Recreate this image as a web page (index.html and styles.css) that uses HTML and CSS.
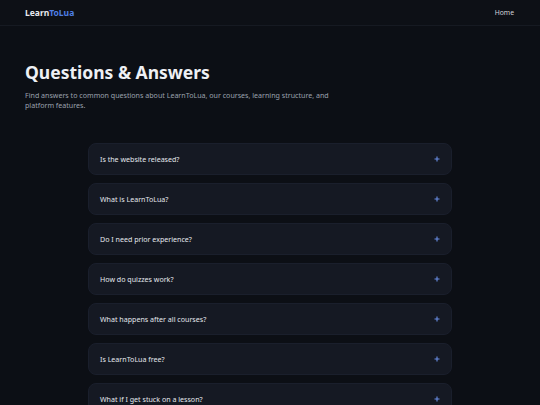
FILE: index.html
```html
<!DOCTYPE html>
<html lang="en">
<head>
<meta charset="utf-8">
<title>Questions &amp; Answers - LearnToLua</title>
<link rel="stylesheet" href="styles.css">
</head>
<body>
<header class="nav">
  <div class="logo">Learn<span class="accent">ToLua</span></div>
  <span class="nav-link">Home</span>
</header>
<main class="page">
  <section class="hero">
    <h1 class="title">Questions &amp; Answers</h1>
    <p class="lead">Find answers to common questions about LearnToLua, our courses, learning structure, and platform features.</p>
  </section>
  <section class="faq">
    <div class="item"><span class="q">Is the website released?</span><svg class="plus" viewBox="0 0 6 6"><path d="M3 0.5V5.5M0.5 3H5.5"/></svg></div>
    <div class="item"><span class="q">What is LearnToLua?</span><svg class="plus" viewBox="0 0 6 6"><path d="M3 0.5V5.5M0.5 3H5.5"/></svg></div>
    <div class="item"><span class="q">Do I need prior experience?</span><svg class="plus" viewBox="0 0 6 6"><path d="M3 0.5V5.5M0.5 3H5.5"/></svg></div>
    <div class="item"><span class="q">How do quizzes work?</span><svg class="plus" viewBox="0 0 6 6"><path d="M3 0.5V5.5M0.5 3H5.5"/></svg></div>
    <div class="item"><span class="q">What happens after all courses?</span><svg class="plus" viewBox="0 0 6 6"><path d="M3 0.5V5.5M0.5 3H5.5"/></svg></div>
    <div class="item"><span class="q">Is LearnToLua free?</span><svg class="plus" viewBox="0 0 6 6"><path d="M3 0.5V5.5M0.5 3H5.5"/></svg></div>
    <div class="item"><span class="q">What if I get stuck on a lesson?</span><svg class="plus" viewBox="0 0 6 6"><path d="M3 0.5V5.5M0.5 3H5.5"/></svg></div>
  </section>
</main>
</body>
</html>
```
FILE: styles.css
```css
* { box-sizing: border-box; }
html, body { margin: 0; padding: 0; }
body {
  background: #0c0f15;
  color: #e6e8ee;
  font-family: "Noto Sans", "Open Sans", sans-serif;
  height: 405px;
  overflow: hidden;
}
.nav {
  height: 26px;
  display: flex;
  align-items: center;
  justify-content: space-between;
  padding: 0 25px;
  border-bottom: 1px solid #161a22;
  background: #0d1016;
}
.logo {
  font-size: 8.5px;
  font-weight: 700;
  color: #e8eaf0;
}
.accent { color: #4f7fe6; }
.nav-link {
  font-size: 6.8px;
  color: #d4d6dc;
  margin-right: 1px;
}
.page { padding: 0 25px; }
.hero { padding-top: 35px; }
.title {
  margin: 0;
  font-size: 17.5px;
  font-weight: 700;
  line-height: 22px;
  color: #eef0f4;
}
.lead {
  margin: 7px 0 0;
  width: 330px;
  font-size: 7.1px;
  line-height: 10px;
  color: #9ba1ad;
}
.faq {
  margin: 33px auto 0;
  width: 364px;
  display: flex;
  flex-direction: column;
  gap: 8px;
}
.item {
  height: 32px;
  flex: none;
  display: flex;
  align-items: center;
  justify-content: space-between;
  padding: 0 11px;
  background: #151923;
  border: 1px solid #1a1f2c;
  border-radius: 8px;
}
.q {
  font-size: 7.1px;
  color: #e4e7ed;
}
.plus {
  width: 6px;
  height: 6px;
  margin-right: 0;
  fill: none;
  stroke: #6a8ee6;
  stroke-width: 1.1;
}
```
